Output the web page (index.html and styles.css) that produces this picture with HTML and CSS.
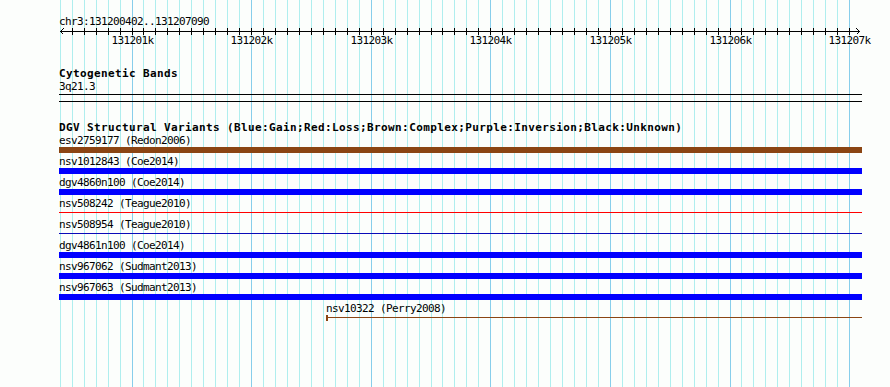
FILE: index.html
```html
<!DOCTYPE html>
<html>
<head>
<meta charset="utf-8">
<title>DGV browser panel</title>
<link rel="stylesheet" href="styles.css">
</head>
<body>
<div class="panel">
  <svg class="grid" width="890" height="387" viewBox="0 0 890 387" shape-rendering="crispEdges" aria-hidden="true">
    <path class="minor" d="M60.5 0V387M72.5 0V387M84.5 0V387M96.5 0V387M108.5 0V387M120.5 0V387M143.5 0V387M155.5 0V387M167.5 0V387M179.5 0V387M191.5 0V387M203.5 0V387M215.5 0V387M227.5 0V387M239.5 0V387M263.5 0V387M275.5 0V387M287.5 0V387M299.5 0V387M311.5 0V387M323.5 0V387M335.5 0V387M347.5 0V387M359.5 0V387M383.5 0V387M395.5 0V387M407.5 0V387M419.5 0V387M431.5 0V387M442.5 0V387M454.5 0V387M466.5 0V387M478.5 0V387M502.5 0V387M514.5 0V387M526.5 0V387M538.5 0V387M550.5 0V387M562.5 0V387M574.5 0V387M586.5 0V387M598.5 0V387M622.5 0V387M634.5 0V387M646.5 0V387M658.5 0V387M670.5 0V387M682.5 0V387M694.5 0V387M706.5 0V387M718.5 0V387M741.5 0V387M753.5 0V387M765.5 0V387M777.5 0V387M789.5 0V387M801.5 0V387M813.5 0V387M825.5 0V387M837.5 0V387"/>
    <path class="major" d="M132.5 0V387M251.5 0V387M371.5 0V387M490.5 0V387M610.5 0V387M730.5 0V387M849.5 0V387"/>
  </svg>
  <div class="content">
    <div class="chrom">chr3:131200402..131207090</div>
    <svg class="ruler" width="890" height="39" viewBox="0 0 890 39">
      <g class="axis" shape-rendering="crispEdges">
        <path d="M60 3.5H860"/>
        <path d="M72.5 0V7M84.5 0V7M96.5 0V7M108.5 0V7M120.5 0V7M132.5 0V7M143.5 0V7M155.5 0V7M167.5 0V7M179.5 0V7M191.5 0V7M203.5 0V7M215.5 0V7M227.5 0V7M239.5 0V7M251.5 0V7M263.5 0V7M275.5 0V7M287.5 0V7M299.5 0V7M311.5 0V7M323.5 0V7M335.5 0V7M347.5 0V7M359.5 0V7M371.5 0V7M383.5 0V7M395.5 0V7M407.5 0V7M419.5 0V7M431.5 0V7M442.5 0V7M454.5 0V7M466.5 0V7M478.5 0V7M490.5 0V7M502.5 0V7M514.5 0V7M526.5 0V7M538.5 0V7M550.5 0V7M562.5 0V7M574.5 0V7M586.5 0V7M598.5 0V7M610.5 0V7M622.5 0V7M634.5 0V7M646.5 0V7M658.5 0V7M670.5 0V7M682.5 0V7M694.5 0V7M706.5 0V7M718.5 0V7M730.5 0V7M741.5 0V7M753.5 0V7M765.5 0V7M777.5 0V7M789.5 0V7M801.5 0V7M813.5 0V7M825.5 0V7M837.5 0V7M849.5 0V7"/>
        <path d="M63.5 0.5L60.5 3.5L63.5 6.5M856.5 0.5L859.5 3.5L856.5 6.5"/>
      </g>
      <g class="ticklabels">
        <text x="132.5" y="16">131201k</text>
        <text x="251.5" y="16">131202k</text>
        <text x="371.5" y="16">131203k</text>
        <text x="490.5" y="16">131204k</text>
        <text x="610.5" y="16">131205k</text>
        <text x="730.5" y="16">131206k</text>
        <text x="849.5" y="16">131207k</text>
      </g>
    </svg>

    <section class="track cyto">
      <div class="title">Cytogenetic Bands</div>
      <div class="label">3q21.3</div>
      <div class="band"></div>
    </section>

    <section class="track dgv">
      <div class="title">DGV Structural Variants (Blue:Gain;Red:Loss;Brown:Complex;Purple:Inversion;Black:Unknown)</div>
      <div class="feat">
        <div class="label">esv2759177 (Redon2006)</div>
        <div class="glyph"><div class="bar brown"></div></div>
      </div>
      <div class="feat">
        <div class="label">nsv1012843 (Coe2014)</div>
        <div class="glyph"><div class="bar blue"></div></div>
      </div>
      <div class="feat">
        <div class="label">dgv4860n100 (Coe2014)</div>
        <div class="glyph"><div class="bar blue"></div></div>
      </div>
      <div class="feat">
        <div class="label">nsv508242 (Teague2010)</div>
        <div class="glyph thin"><div class="line red"></div></div>
      </div>
      <div class="feat">
        <div class="label">nsv508954 (Teague2010)</div>
        <div class="glyph thin"><div class="line navy"></div></div>
      </div>
      <div class="feat">
        <div class="label">dgv4861n100 (Coe2014)</div>
        <div class="glyph"><div class="bar blue"></div></div>
      </div>
      <div class="feat">
        <div class="label">nsv967062 (Sudmant2013)</div>
        <div class="glyph"><div class="bar blue"></div></div>
      </div>
      <div class="feat">
        <div class="label">nsv967063 (Sudmant2013)</div>
        <div class="glyph"><div class="bar blue"></div></div>
      </div>
      <div class="feat partial">
        <div class="label">nsv10322 (Perry2008)</div>
        <div class="glyph open"><div class="cap"></div><div class="line brownline"></div></div>
      </div>
    </section>
  </div>
</div>
</body>
</html>
```
FILE: styles.css
```css
html, body {
  margin: 0;
  padding: 0;
  background: #fcfefc;
}

.panel {
  position: relative;
  width: 890px;
  height: 387px;
  overflow: hidden;
  font-family: "DejaVu Sans Mono", "Liberation Mono", monospace;
  font-size: 11px;
  line-height: 13px;
  letter-spacing: -0.62px;
  color: #000;
}

.grid {
  position: absolute;
  left: 0;
  top: 0;
  z-index: 0;
}

.grid .minor {
  stroke: #afeeee;
  stroke-width: 1;
  fill: none;
}

.grid .major {
  stroke: #87ceeb;
  stroke-width: 1;
  fill: none;
}

.content {
  position: relative;
  z-index: 1;
  padding-top: 15px;
}

.chrom {
  padding-left: 59px;
  height: 13px;
  white-space: nowrap;
}

.ruler {
  display: block;
}

.ruler .axis path {
  stroke: #000;
  stroke-width: 1;
  fill: none;
}

.ruler .ticklabels text {
  font-family: "DejaVu Sans Mono", "Liberation Mono", monospace;
  font-size: 11px;
  letter-spacing: -0.62px;
  text-anchor: middle;
  fill: #000;
}

.track {
  padding-left: 59px;
  width: 803px;
}

.title {
  font-weight: bold;
  letter-spacing: 0.38px;
  white-space: nowrap;
  height: 13px;
}

.label {
  white-space: nowrap;
  height: 13px;
}

.cyto .band {
  margin-top: 1px;
  height: 6px;
  border-top: 1px solid #000;
  border-bottom: 1px solid #000;
}

.dgv {
  margin-top: 19px;
}

.feat .glyph {
  display: flow-root;
  box-sizing: border-box;
  height: 6px;
  margin-bottom: 2px;
}

.feat .glyph.thin {
  padding-top: 2px;
}

.bar {
  height: 6px;
}

.line {
  height: 1px;
}

.brown { background: #8b4513; }
.blue { background: #0000ff; }
.red { background: #ff0000; }
.navy { background: #0a0ab8; }
.brownline { background: #8b4513; }

.feat.partial {
  margin-left: 267px;
}

.glyph.open {
  display: flex;
  align-items: flex-start;
}

.glyph.open .cap {
  width: 2px;
  height: 6px;
  background: #8b4513;
}

.glyph.open .line {
  flex: 1;
  margin-top: 2px;
}
```
